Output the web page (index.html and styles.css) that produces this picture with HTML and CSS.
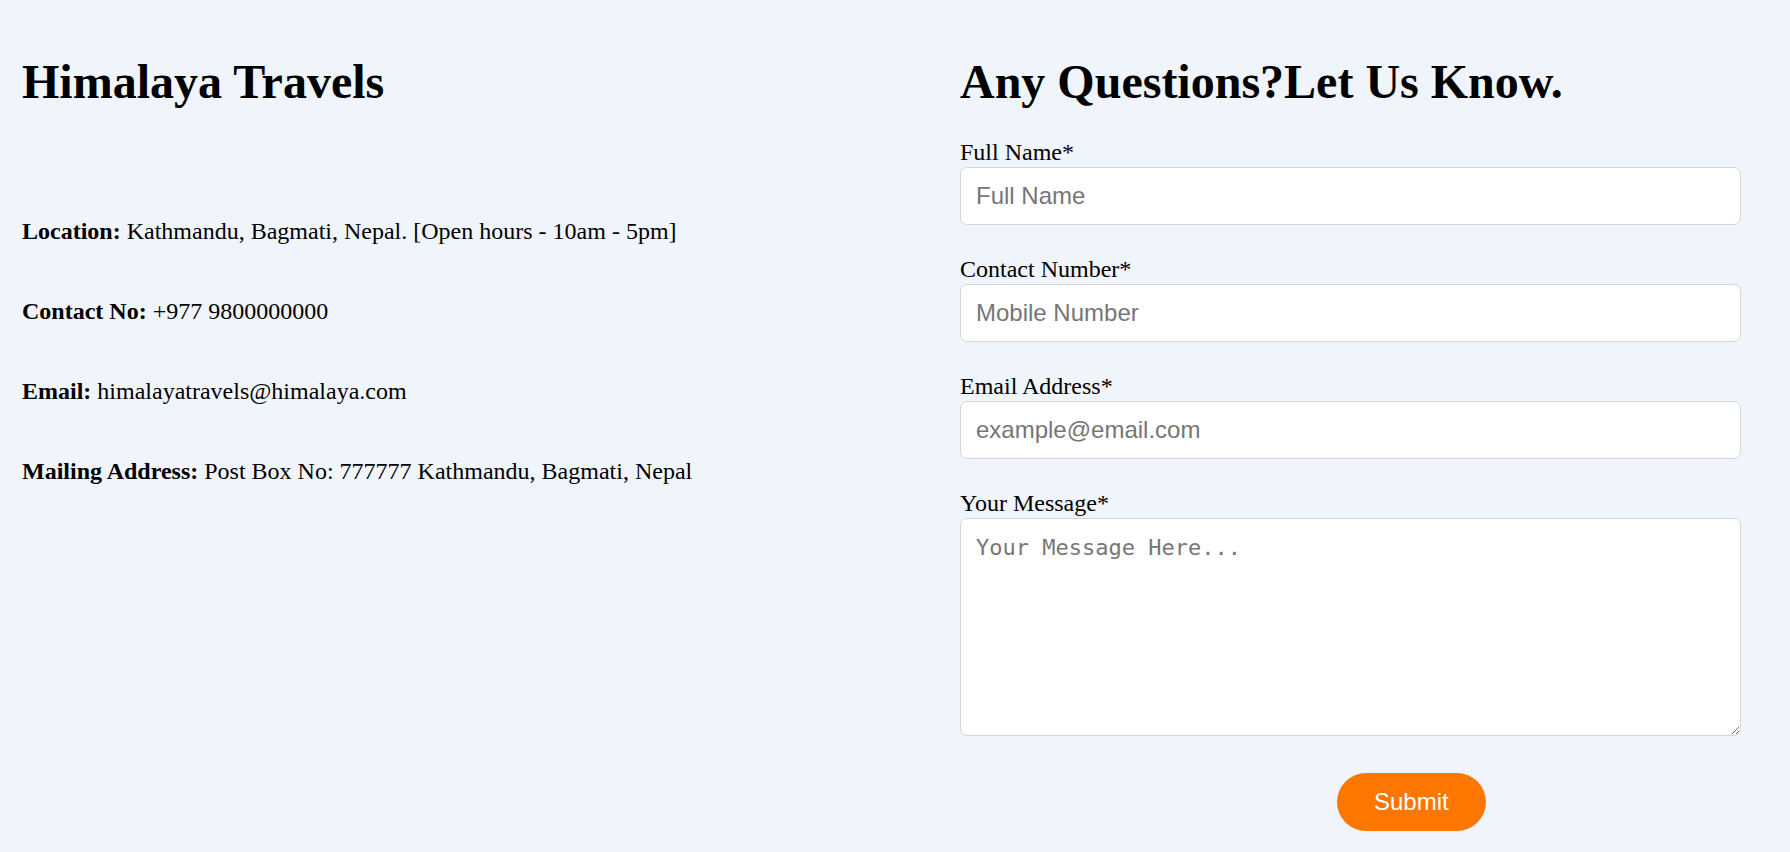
FILE: index.html
```html
<!DOCTYPE html>
<html lang="en">
<head>
<meta charset="utf-8">
<title>Himalaya Travels - Contact</title>
<link rel="stylesheet" href="styles.css">
</head>
<body>
<main class="page">
  <section class="info">
    <h1 class="title">Himalaya Travels</h1>
    <div class="details">
      <p class="detail"><strong>Location:</strong> Kathmandu, Bagmati, Nepal. [Open hours - 10am - 5pm]</p>
      <p class="detail"><strong>Contact No:</strong> +977 9800000000</p>
      <p class="detail"><strong>Email:</strong> himalayatravels@himalaya.com</p>
      <p class="detail"><strong>Mailing Address:</strong> Post Box No: 777777 Kathmandu, Bagmati, Nepal</p>
    </div>
  </section>
  <section class="contact">
    <h1 class="title">Any Questions?Let Us Know.</h1>
    <form class="form">
      <div class="field">
        <label class="label" for="name">Full Name*</label>
        <input class="input" id="name" type="text" placeholder="Full Name">
      </div>
      <div class="field">
        <label class="label" for="phone">Contact Number*</label>
        <input class="input" id="phone" type="text" placeholder="Mobile Number">
      </div>
      <div class="field">
        <label class="label" for="email">Email Address*</label>
        <input class="input" id="email" type="email" placeholder="example@email.com">
      </div>
      <div class="field">
        <label class="label" for="msg">Your Message*</label>
        <textarea class="textarea" id="msg" placeholder="Your Message Here..."></textarea>
      </div>
      <div class="actions">
        <button class="submit" type="button">Submit</button>
      </div>
    </form>
  </section>
</main>
</body>
</html>
```
FILE: styles.css
```css
html, body {
  margin: 0;
  padding: 0;
}

body {
  background: #f0f4fb;
  color: #000;
  font-family: "Liberation Serif", "Times New Roman", serif;
  font-size: 24px;
  overflow: hidden;
}

.page {
  display: grid;
  grid-template-columns: 938px 781px;
  padding: 54px 0 0 22px;
}

.title {
  margin: 0;
  font-size: 48px;
  line-height: 55px;
  font-weight: bold;
}

.details {
  margin-top: 108px;
}

.detail {
  margin: 0 0 52px;
  line-height: 28px;
}

.form {
  display: flex;
  flex-direction: column;
  margin-top: 29px;
}

.field {
  display: flex;
  flex-direction: column;
  margin-bottom: 30px;
}

.label {
  display: block;
  line-height: 28.5px;
}

.input,
.textarea {
  box-sizing: border-box;
  width: 100%;
  margin: 0;
  border: 1px solid #d3d6dc;
  border-radius: 7px;
  background: #fff;
  padding: 15px;
  outline: none;
}

.input {
  height: 58.5px;
  font-family: "Liberation Sans", Arial, sans-serif;
  font-size: 24px;
}

.input::placeholder {
  color: #767676;
}

.textarea {
  height: 218px;
  font-family: "DejaVu Sans Mono", "Liberation Mono", monospace;
  font-size: 22px;
  padding-top: 16px;
  resize: both;
}

.textarea::placeholder {
  color: #767676;
}

.actions {
  display: flex;
  margin-top: 7px;
  padding-left: 377px;
}

.submit {
  background: #fd7600;
  color: #fff;
  border: none;
  border-radius: 30px;
  height: 58px;
  padding: 0 37px;
  font-family: "Liberation Sans", Arial, sans-serif;
  font-size: 24px;
  cursor: pointer;
}
```
